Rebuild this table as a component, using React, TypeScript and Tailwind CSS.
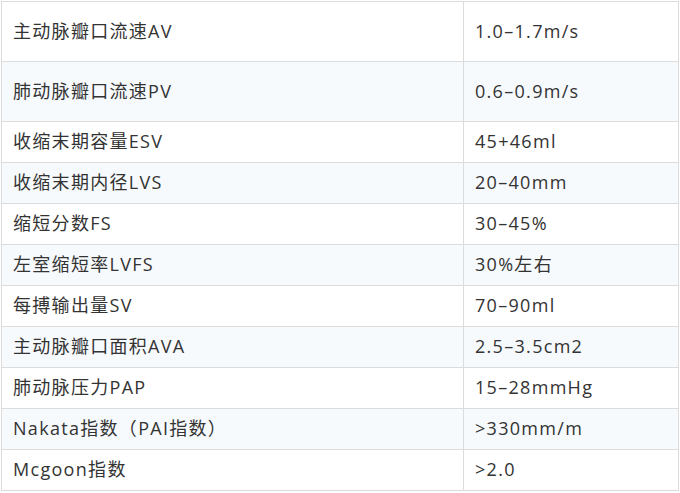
import React from 'react';

type Row = { name: string; value: string; tall?: boolean };

const rows: Row[] = [
  { name: '主动脉瓣口流速AV', value: '1.0–1.7m/s', tall: true },
  { name: '肺动脉瓣口流速PV', value: '0.6–0.9m/s', tall: true },
  { name: '收缩末期容量ESV', value: '45+46ml' },
  { name: '收缩末期内径LVS', value: '20–40mm' },
  { name: '缩短分数FS', value: '30–45%' },
  { name: '左室缩短率LVFS', value: '30%左右' },
  { name: '每搏输出量SV', value: '70–90ml' },
  { name: '主动脉瓣口面积AVA', value: '2.5–3.5cm2' },
  { name: '肺动脉压力PAP', value: '15–28mmHg' },
  { name: 'Nakata指数（PAI指数）', value: '>330mm/m' },
  { name: 'Mcgoon指数', value: '>2.0' },
];

const App = () => {
  return (
    <div className="w-[680px] h-[493px] bg-white pt-px pl-px">
      <table
        className="w-[678px] border-collapse text-[18px] tracking-[1.3px] text-[#333333]"
        style={{ fontFamily: '"Open Sans", "Noto Sans CJK SC", sans-serif' }}
      >
        <tbody>
          {rows.map((row, i) => (
            <tr key={row.name} className={i % 2 === 1 ? 'bg-[#f7fafd]' : 'bg-white'}>
              <td
                className={`w-[462px] border border-[#dcdcdc] pl-[11px] pb-[2px] leading-none ${
                  row.tall ? 'h-[60px]' : 'h-[41px]'
                }`}
              >
                {row.name}
              </td>
              <td className="border border-[#dcdcdc] pl-[11px] pb-[2px] leading-none">{row.value}</td>
            </tr>
          ))}
        </tbody>
      </table>
    </div>
  );
};

export default App;
